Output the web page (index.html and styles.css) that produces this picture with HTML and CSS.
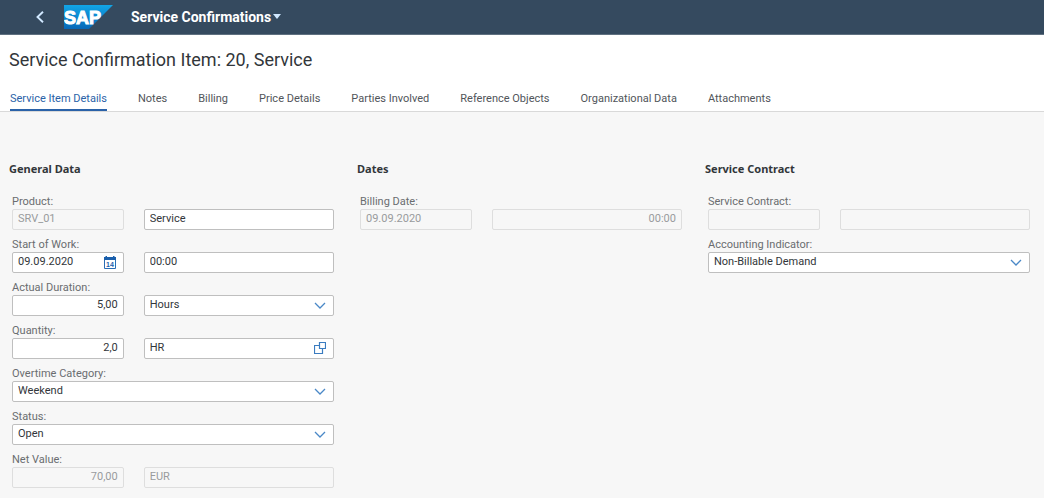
FILE: index.html
```html
<!DOCTYPE html>
<html lang="en">
<head>
<meta charset="utf-8">
<meta name="viewport" content="width=device-width, initial-scale=1">
<title>Service Confirmations</title>
<link rel="stylesheet" href="styles.css">
</head>
<body>
<header class="shell">
  <button class="back" type="button" aria-label="Back">
    <svg width="8" height="12" viewBox="0 0 8 12"><path d="M7 .8 1.5 6 7 11.2" fill="none" stroke="currentColor" stroke-width="1.9"/></svg>
  </button>
  <svg class="logo" width="49" height="24" viewBox="0 0 49 24" role="img" aria-label="SAP">
    <defs><linearGradient id="sky" x1="0" y1="0" x2="0" y2="1"><stop offset="0" stop-color="#12a5e6"/><stop offset="1" stop-color="#0768b8"/></linearGradient></defs>
    <path d="M0 0H49L25 24H0Z" fill="url(#sky)"/>
    <text class="logo-text" x="0" y="19">SAP</text>
  </svg>
  <button class="app-title" type="button">Service Confirmations
    <svg width="8" height="5" viewBox="0 0 8 5"><path d="M0 0H8L4 5Z" fill="#d1e8ff"/></svg>
  </button>
</header>
<div class="page-head">
  <h1 class="page-title">Service Confirmation Item: 20, Service</h1>
  <nav class="tabs" aria-label="Sections">
    <a class="tab tab-active" href="#details" aria-current="true">Service Item Details</a>
    <a class="tab" href="#notes">Notes</a>
    <a class="tab" href="#billing">Billing</a>
    <a class="tab" href="#price">Price Details</a>
    <a class="tab" href="#parties">Parties Involved</a>
    <a class="tab" href="#objects">Reference Objects</a>
    <a class="tab" href="#organization">Organizational Data</a>
    <a class="tab" href="#attachments">Attachments</a>
  </nav>
</div>
<main class="content" id="details">
  <section class="group">
    <h2 class="group-title">General Data</h2>
    <div class="fields">
      <div class="field">
        <label class="label" for="product">Product:</label>
        <input class="input" id="product" value="SRV_01" disabled>
        <input class="input" aria-label="Product description" value="Service">
      </div>
      <div class="field">
        <label class="label" for="start">Start of Work:</label>
        <div class="control">
          <input class="input" id="start" value="09.09.2020">
          <button class="icon" type="button" aria-label="Open calendar">
            <svg width="12" height="13" viewBox="0 0 12 13"><path d="M.5 2.5H11.500V12.500H.5Z" fill="#fff" stroke="#2a6db5"/><path d="M0 1H1.500V0H3V1H9V0H10.500V1H12V4H0Z" fill="#1a5fac"/><text class="day" x="6" y="11">14</text></svg>
          </button>
        </div>
        <input class="input" aria-label="Start time" value="00:00">
      </div>
      <div class="field">
        <label class="label" for="duration">Actual Duration:</label>
        <input class="input number" id="duration" value="5,00">
        <div class="control">
          <select class="input select" aria-label="Duration unit"><option>Hours</option></select>
          <svg class="icon arrow" width="12" height="12" viewBox="0 0 12 12"><path d="M1 4 6 9 11 4"/></svg>
        </div>
      </div>
      <div class="field">
        <label class="label" for="quantity">Quantity:</label>
        <input class="input number" id="quantity" value="2,0">
        <div class="control">
          <input class="input" aria-label="Quantity unit" value="HR">
          <button class="icon" type="button" aria-label="Value help">
            <svg width="12" height="12" viewBox="0 0 12 12"><path d="M5.500 .5H11.500V6.500H5.500ZM5.500 3.500H.5V11.500H8.500V6.500" fill="none" stroke="#3b7cc0" stroke-width="1.200"/></svg>
          </button>
        </div>
      </div>
      <div class="field">
        <label class="label" for="overtime">Overtime Category:</label>
        <div class="control wide">
          <select class="input select" id="overtime"><option>Weekend</option></select>
          <svg class="icon arrow" width="12" height="12" viewBox="0 0 12 12"><path d="M1 4 6 9 11 4"/></svg>
        </div>
      </div>
      <div class="field">
        <label class="label" for="status">Status:</label>
        <div class="control wide">
          <select class="input select" id="status"><option>Open</option></select>
          <svg class="icon arrow" width="12" height="12" viewBox="0 0 12 12"><path d="M1 4 6 9 11 4"/></svg>
        </div>
      </div>
      <div class="field">
        <label class="label" for="net">Net Value:</label>
        <input class="input number" id="net" value="70,00" disabled>
        <input class="input" aria-label="Currency" value="EUR" disabled>
      </div>
    </div>
  </section>
  <section class="group">
    <h2 class="group-title">Dates</h2>
    <div class="fields">
      <div class="field">
        <label class="label" for="billing-date">Billing Date:</label>
        <input class="input" id="billing-date" value="09.09.2020" disabled>
        <input class="input number" aria-label="Billing time" value="00:00" disabled>
      </div>
    </div>
  </section>
  <section class="group">
    <h2 class="group-title">Service Contract</h2>
    <div class="fields">
      <div class="field">
        <label class="label" for="contract">Service Contract:</label>
        <input class="input" id="contract" disabled>
        <input class="input" aria-label="Contract description" disabled>
      </div>
      <div class="field">
        <label class="label" for="accounting">Accounting Indicator:</label>
        <div class="control wide">
          <select class="input select" id="accounting"><option>Non-Billable Demand</option></select>
          <svg class="icon arrow" width="12" height="12" viewBox="0 0 12 12"><path d="M1 4 6 9 11 4"/></svg>
        </div>
      </div>
    </div>
  </section>
</main>
</body>
</html>
```

FILE: styles.css
```css
* { box-sizing: border-box; }

body {
  margin: 0;
  min-height: 100vh;
  display: flex;
  flex-direction: column;
  background: #f7f7f7;
  color: #32363a;
  font: 11px/14px Roboto, sans-serif;
}

button { padding: 0; border: 0; background: none; font: inherit; cursor: pointer; }
svg { display: block; }

.shell {
  display: flex;
  align-items: center;
  height: 35px;
  padding: 0 36px 1px;
  background: #354a5f;
  border-bottom: 1px solid #5f7080;
}
.back { color: #d1e8ff; margin-right: 20px; }
.logo { margin-right: 18px; }
.logo-text { font: bold 18px "Liberation Sans", sans-serif; fill: #fff; stroke: #fff; stroke-width: 1px; }
.app-title {
  display: flex;
  align-items: center;
  gap: 2px;
  color: #fff;
  font: 700 14px/16px Roboto, sans-serif;
}

.page-head { background: #fff; border-bottom: 1px solid #d9d9d9; }
.page-title { margin: 0; padding: 14px 9px 0; font-size: 18px; line-height: 22px; font-weight: 400; }
.tabs { display: flex; gap: 31px; padding: 16px 10px 0; }
.tab {
  padding: 5px 0 3px;
  border-bottom: 2px solid transparent;
  color: #51555a;
  text-decoration: none;
  white-space: nowrap;
}
.tab-active { color: #2a62a8; border-color: #2a62a8; }

.content { display: grid; grid-template-columns: repeat(3, 1fr); padding-top: 50px; }
.group { padding: 0 14px 8px 9px; }
.group-title { margin: 0 0 19px; font: 700 11px/14px "Noto Sans", sans-serif; }
.fields { display: grid; gap: 8px; padding-left: 3px; }
.field { display: grid; grid-template-columns: 37fr 63fr; column-gap: 20px; }
.label { grid-column: 1 / -1; color: #6a6d70; }
.control { position: relative; }
.wide { grid-column: 1 / -1; }
.input {
  display: block;
  width: 100%;
  min-width: 0;
  height: 21px;
  margin: 0;
  padding: 0 5px 2px;
  border: 1px solid #bfbfbf;
  border-radius: 2px;
  background: #fff;
  color: #32363a;
  font: inherit;
  appearance: none;
}
.select { padding-bottom: 1px; }
.input:disabled { background: transparent; border-color: #dedede; color: #999b9d; opacity: 1; }
.number { text-align: right; }

.icon { position: absolute; top: 4px; right: 8px; }
.arrow { pointer-events: none; fill: none; stroke: #4a88c7; stroke-width: 1.3px; }
.day { font: bold 7px "Liberation Sans", sans-serif; fill: #1a5fac; text-anchor: middle; }
```
